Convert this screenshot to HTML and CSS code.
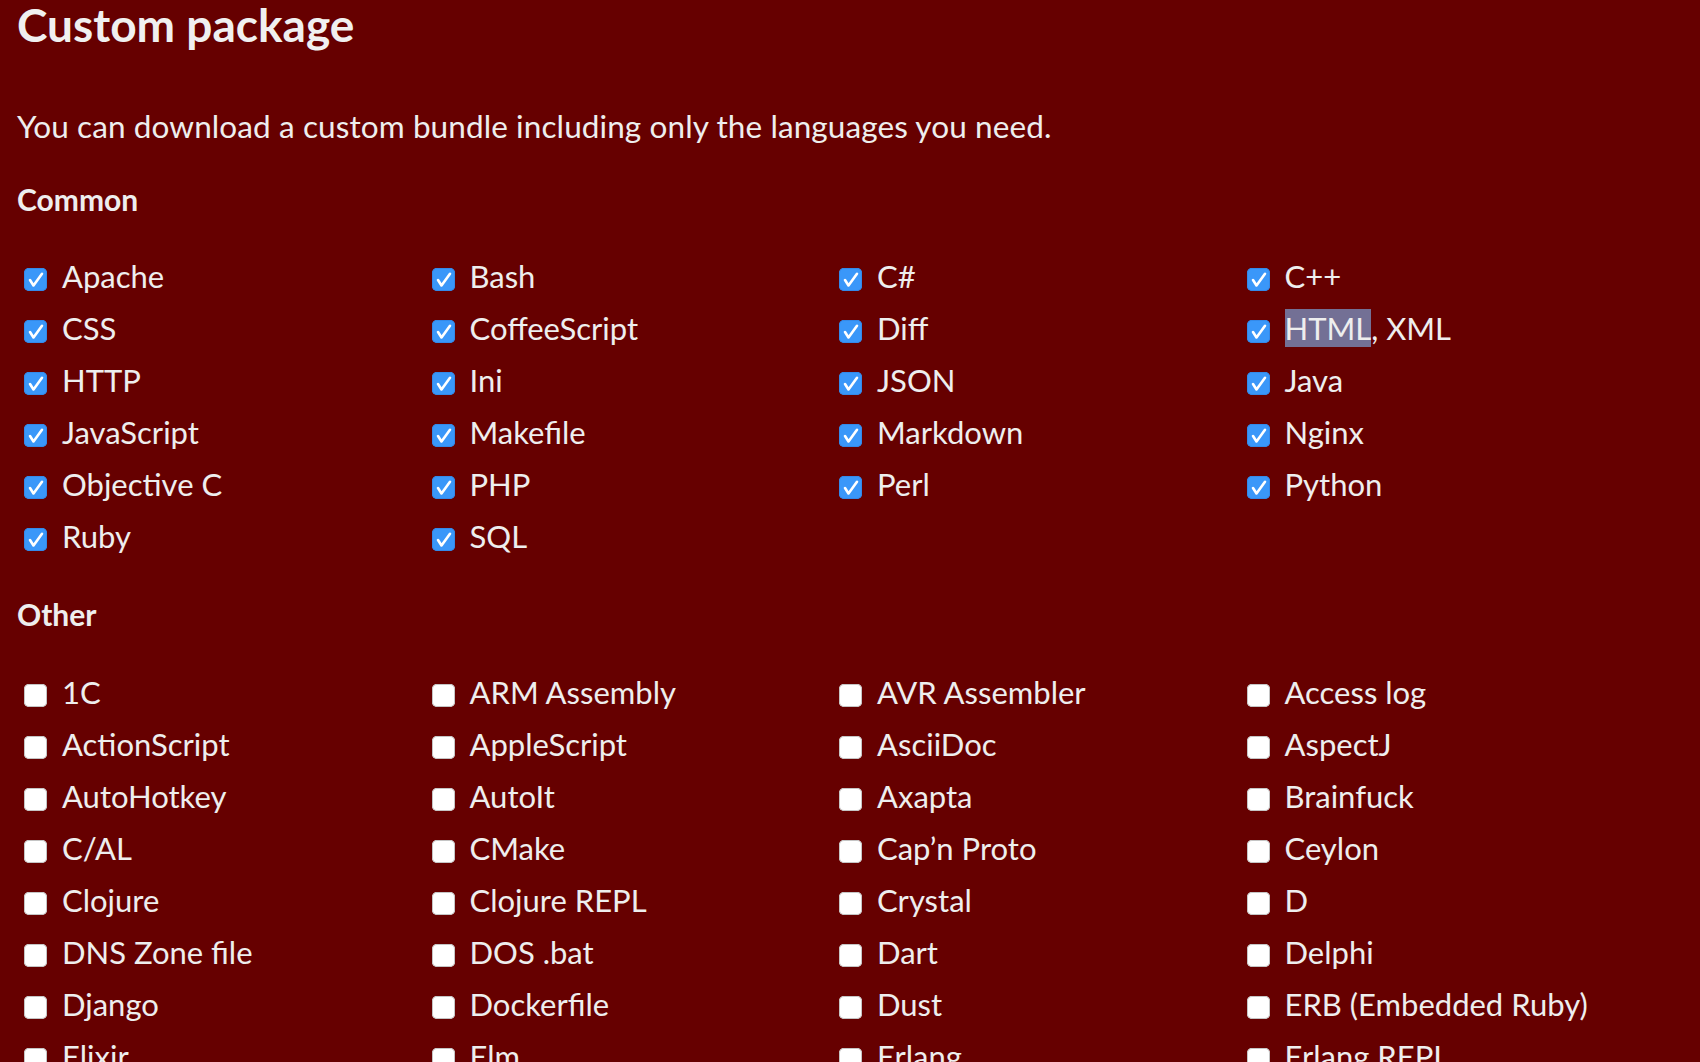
FILE: index.html
```html
<!DOCTYPE html>
<html lang="en">
<head>
<meta charset="utf-8">
<title>Custom package</title>
<link rel="stylesheet" href="styles.css">
</head>
<body>
<main class="page">
  <h1 class="title">Custom package</h1>
  <p class="intro">You can download a custom bundle including only the languages you need.</p>

  <h3 class="group-title">Common</h3>
  <ul class="langs">
    <li class="lang"><span class="box on"><svg viewBox="0 0 23 23"><path d="M6 12 L9.5 17.5 L18 5.8"/></svg></span><span class="name">Apache</span></li>
    <li class="lang"><span class="box on"><svg viewBox="0 0 23 23"><path d="M6 12 L9.5 17.5 L18 5.8"/></svg></span><span class="name">Bash</span></li>
    <li class="lang"><span class="box on"><svg viewBox="0 0 23 23"><path d="M6 12 L9.5 17.5 L18 5.8"/></svg></span><span class="name">C#</span></li>
    <li class="lang"><span class="box on"><svg viewBox="0 0 23 23"><path d="M6 12 L9.5 17.5 L18 5.8"/></svg></span><span class="name">C++</span></li>
    <li class="lang"><span class="box on"><svg viewBox="0 0 23 23"><path d="M6 12 L9.5 17.5 L18 5.8"/></svg></span><span class="name">CSS</span></li>
    <li class="lang"><span class="box on"><svg viewBox="0 0 23 23"><path d="M6 12 L9.5 17.5 L18 5.8"/></svg></span><span class="name">CoffeeScript</span></li>
    <li class="lang"><span class="box on"><svg viewBox="0 0 23 23"><path d="M6 12 L9.5 17.5 L18 5.8"/></svg></span><span class="name">Diff</span></li>
    <li class="lang"><span class="box on"><svg viewBox="0 0 23 23"><path d="M6 12 L9.5 17.5 L18 5.8"/></svg></span><span class="name"><span class="sel">HTML</span>, XML</span></li>
    <li class="lang"><span class="box on"><svg viewBox="0 0 23 23"><path d="M6 12 L9.5 17.5 L18 5.8"/></svg></span><span class="name">HTTP</span></li>
    <li class="lang"><span class="box on"><svg viewBox="0 0 23 23"><path d="M6 12 L9.5 17.5 L18 5.8"/></svg></span><span class="name">Ini</span></li>
    <li class="lang"><span class="box on"><svg viewBox="0 0 23 23"><path d="M6 12 L9.5 17.5 L18 5.8"/></svg></span><span class="name">JSON</span></li>
    <li class="lang"><span class="box on"><svg viewBox="0 0 23 23"><path d="M6 12 L9.5 17.5 L18 5.8"/></svg></span><span class="name">Java</span></li>
    <li class="lang"><span class="box on"><svg viewBox="0 0 23 23"><path d="M6 12 L9.5 17.5 L18 5.8"/></svg></span><span class="name">JavaScript</span></li>
    <li class="lang"><span class="box on"><svg viewBox="0 0 23 23"><path d="M6 12 L9.5 17.5 L18 5.8"/></svg></span><span class="name">Makefile</span></li>
    <li class="lang"><span class="box on"><svg viewBox="0 0 23 23"><path d="M6 12 L9.5 17.5 L18 5.8"/></svg></span><span class="name">Markdown</span></li>
    <li class="lang"><span class="box on"><svg viewBox="0 0 23 23"><path d="M6 12 L9.5 17.5 L18 5.8"/></svg></span><span class="name">Nginx</span></li>
    <li class="lang"><span class="box on"><svg viewBox="0 0 23 23"><path d="M6 12 L9.5 17.5 L18 5.8"/></svg></span><span class="name">Objective C</span></li>
    <li class="lang"><span class="box on"><svg viewBox="0 0 23 23"><path d="M6 12 L9.5 17.5 L18 5.8"/></svg></span><span class="name">PHP</span></li>
    <li class="lang"><span class="box on"><svg viewBox="0 0 23 23"><path d="M6 12 L9.5 17.5 L18 5.8"/></svg></span><span class="name">Perl</span></li>
    <li class="lang"><span class="box on"><svg viewBox="0 0 23 23"><path d="M6 12 L9.5 17.5 L18 5.8"/></svg></span><span class="name">Python</span></li>
    <li class="lang"><span class="box on"><svg viewBox="0 0 23 23"><path d="M6 12 L9.5 17.5 L18 5.8"/></svg></span><span class="name">Ruby</span></li>
    <li class="lang"><span class="box on"><svg viewBox="0 0 23 23"><path d="M6 12 L9.5 17.5 L18 5.8"/></svg></span><span class="name">SQL</span></li>
  </ul>

  <h3 class="group-title other">Other</h3>
  <ul class="langs langs-other">
    <li class="lang"><span class="box"></span><span class="name">1C</span></li>
    <li class="lang"><span class="box"></span><span class="name">ARM Assembly</span></li>
    <li class="lang"><span class="box"></span><span class="name">AVR Assembler</span></li>
    <li class="lang"><span class="box"></span><span class="name">Access log</span></li>
    <li class="lang"><span class="box"></span><span class="name">ActionScript</span></li>
    <li class="lang"><span class="box"></span><span class="name">AppleScript</span></li>
    <li class="lang"><span class="box"></span><span class="name">AsciiDoc</span></li>
    <li class="lang"><span class="box"></span><span class="name">AspectJ</span></li>
    <li class="lang"><span class="box"></span><span class="name">AutoHotkey</span></li>
    <li class="lang"><span class="box"></span><span class="name">AutoIt</span></li>
    <li class="lang"><span class="box"></span><span class="name">Axapta</span></li>
    <li class="lang"><span class="box"></span><span class="name">Brainfuck</span></li>
    <li class="lang"><span class="box"></span><span class="name">C/AL</span></li>
    <li class="lang"><span class="box"></span><span class="name">CMake</span></li>
    <li class="lang"><span class="box"></span><span class="name">Cap’n Proto</span></li>
    <li class="lang"><span class="box"></span><span class="name">Ceylon</span></li>
    <li class="lang"><span class="box"></span><span class="name">Clojure</span></li>
    <li class="lang"><span class="box"></span><span class="name">Clojure REPL</span></li>
    <li class="lang"><span class="box"></span><span class="name">Crystal</span></li>
    <li class="lang"><span class="box"></span><span class="name">D</span></li>
    <li class="lang"><span class="box"></span><span class="name">DNS Zone file</span></li>
    <li class="lang"><span class="box"></span><span class="name">DOS .bat</span></li>
    <li class="lang"><span class="box"></span><span class="name">Dart</span></li>
    <li class="lang"><span class="box"></span><span class="name">Delphi</span></li>
    <li class="lang"><span class="box"></span><span class="name">Django</span></li>
    <li class="lang"><span class="box"></span><span class="name">Dockerfile</span></li>
    <li class="lang"><span class="box"></span><span class="name">Dust</span></li>
    <li class="lang"><span class="box"></span><span class="name">ERB (Embedded Ruby)</span></li>
    <li class="lang"><span class="box"></span><span class="name">Elixir</span></li>
    <li class="lang"><span class="box"></span><span class="name">Elm</span></li>
    <li class="lang"><span class="box"></span><span class="name">Erlang</span></li>
    <li class="lang"><span class="box"></span><span class="name">Erlang REPL</span></li>
  </ul>
</main>
</body>
</html>
```

FILE: styles.css
```css
html {
  overflow: hidden;
}

body {
  margin: 0;
  background: #660000;
  color: #eeeeee;
  font-family: Lato, "Open Sans", sans-serif;
}

.page {
  padding: 0 0 0 17px;
}

.title {
  margin: 0;
  font-size: 46px;
  line-height: 50px;
  font-weight: 700;
  color: #f0f0f0;
}

.intro {
  margin: 60px 0 0;
  font-size: 31.5px;
  line-height: 32px;
  letter-spacing: 0.1px;
}

.group-title {
  margin: 41px 0 0;
  font-size: 30px;
  line-height: 32px;
  font-weight: 700;
}

.group-title.other {
  margin-top: 32px;
}

.langs {
  list-style: none;
  margin: 39px 0 0;
  padding: 0;
  width: 1630px;
  display: grid;
  grid-template-columns: repeat(4, 1fr);
  grid-auto-rows: 52px;
}

.langs-other {
  margin-top: 40px;
}

.lang {
  display: flex;
  align-items: flex-start;
}

.box {
  flex: none;
  width: 23px;
  height: 23px;
  margin: 14px 15px 0 7px;
  border-radius: 5px;
  background: #ffffff;
  box-shadow: inset 0 0 0 1px #c4c4c4;
}

.box.on {
  background: #3a97f9;
  box-shadow: inset 0 0 0 1px #3489e8;
}

.box svg {
  display: block;
  width: 23px;
  height: 23px;
}

.box svg path {
  fill: none;
  stroke: #ffffff;
  stroke-width: 2.6;
  stroke-linecap: round;
  stroke-linejoin: round;
}

.name {
  font-size: 31px;
  line-height: 44px;
  white-space: nowrap;
}

.sel {
  background: #737095;
}
```
